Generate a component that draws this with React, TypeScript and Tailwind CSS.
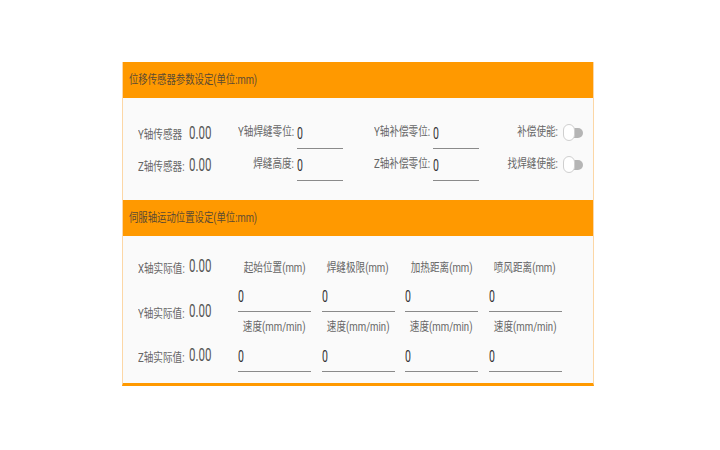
import React from 'react';

const font = { fontFamily: 'Roboto, "Noto Sans CJK SC", sans-serif' };

// the screenshot's type is narrow, so squeeze each run of text horizontally
const Lbl = ({ children, align = 'left' }: { children: React.ReactNode; align?: 'left' | 'right' | 'center' }) => (
  <span
    className={`inline-block whitespace-nowrap text-[12px] leading-[20px] scale-x-[0.8] ${
      align === 'right' ? 'origin-right' : align === 'center' ? 'origin-center' : 'origin-left'
    }`}
  >
    {children}
  </span>
);

const Num = ({ children }: { children: React.ReactNode }) => (
  <span className="inline-block whitespace-nowrap text-[18px] leading-[20px] text-[#555] origin-left scale-x-[0.64]">
    {children}
  </span>
);

const Zero = () => (
  <span className="inline-block text-[17px] leading-[22px] text-[#333] origin-left scale-x-[0.62]">0</span>
);

const Toggle = () => (
  <div className="relative w-[20px] h-[17px]">
    <div className="absolute right-0 top-[4px] w-[14px] h-[10px] rounded-r-full bg-[#b5b5b5]" />
    <div className="absolute left-0 top-0 w-[12px] h-[17px] rounded-full bg-white border border-[#cfcfcf]" />
  </div>
);

const LineInput = () => (
  <div className="w-[46px] h-[27px] border-b border-[#8a8a8a]">
    <Zero />
  </div>
);

const Header = ({ title }: { title: string }) => (
  <div className="h-[36px] bg-[#ff9900] flex items-center px-[6px] text-[#5b4a33]">
    <span className="inline-block whitespace-nowrap text-[12px] origin-left scale-x-[0.78]">{title}</span>
  </div>
);

export default function App() {
  const cols = [
    { top: '起始位置(mm)', bottom: '速度(mm/min)' },
    { top: '焊缝极限(mm)', bottom: '速度(mm/min)' },
    { top: '加热距离(mm)', bottom: '速度(mm/min)' },
    { top: '喷风距离(mm)', bottom: '速度(mm/min)' },
  ];

  return (
    <div className="w-[720px] h-[450px] bg-white pt-[62px]" style={font}>
      <div className="ml-[122px] w-[472px] border-x border-[#fcd7a6] border-b-[3px] border-b-[#ff9900]">
        <Header title="位移传感器参数设定(单位:mm)" />
        <div className="bg-[#fafafa] pt-[24px] pb-[18px] pl-[15px] flex flex-col gap-[4px] text-[#666]">
          {[
            ['Y轴传感器', 'Y轴焊缝零位:', 'Y轴补偿零位:', '补偿使能:'],
            ['Z轴传感器:', '焊缝高度:', 'Z轴补偿零位:', '找焊缝使能:'],
          ].map((r, i) => (
            <div key={i} className="flex items-start h-[28px]">
              <div className="w-[51px]">
                <Lbl>{r[0]}</Lbl>
              </div>
              <div className="w-[40px]">
                <Num>0.00</Num>
              </div>
              <div className="w-[65px] flex justify-end">
                <Lbl align="right">{r[1]}</Lbl>
              </div>
              <div className="ml-[3px]">
                <LineInput />
              </div>
              <div className="w-[87px] flex justify-end">
                <Lbl align="right">{r[2]}</Lbl>
              </div>
              <div className="ml-[3px]">
                <LineInput />
              </div>
              <div className="w-[79px] flex justify-end">
                <Lbl align="right">{r[3]}</Lbl>
              </div>
              <div className="ml-[5px] mt-[2px]">
                <Toggle />
              </div>
            </div>
          ))}
        </div>
        <Header title="伺服轴运动位置设定(单位:mm)" />
        <div className="bg-[#fafafa] pt-[20px] pb-[11px] pl-[15px] flex text-[#666]">
          <div className="w-[100px] flex flex-col">
            {['X轴实际值:', 'Y轴实际值:', 'Z轴实际值:'].map((l, i) => (
              <div
                key={l}
                className={`flex h-[20px] ${i === 1 ? 'mt-[25px]' : i === 2 ? 'mt-[24px]' : ''}`}
              >
                <div className="w-[51px]">
                  <Lbl>{l}</Lbl>
                </div>
                <Num>0.00</Num>
              </div>
            ))}
          </div>
          <div className="pt-[2px] grid grid-cols-[73px_73px_73px_73px] gap-x-[10.5px]">
            {cols.map((c) => (
              <div key={c.top} className="flex flex-col">
                <div className="h-[20px] flex justify-center">
                  <Lbl align="center">{c.top}</Lbl>
                </div>
                <div className="mt-[2px] h-[32px] border-b border-[#8a8a8a] pt-[5px]">
                  <Zero />
                </div>
                <div className="mt-[5px] h-[20px] flex justify-center">
                  <Lbl align="center">{c.bottom}</Lbl>
                </div>
                <div className="mt-[3px] h-[32px] border-b border-[#8a8a8a] pt-[5px]">
                  <Zero />
                </div>
              </div>
            ))}
          </div>
        </div>
      </div>
    </div>
  );
}
